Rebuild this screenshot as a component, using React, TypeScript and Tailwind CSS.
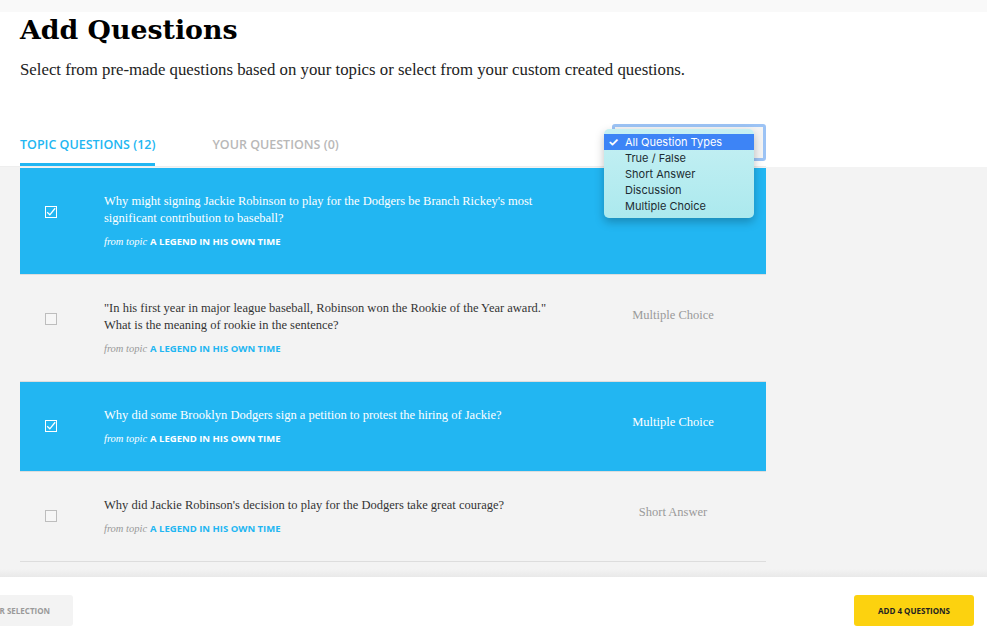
import React from 'react';

type Question = {
  lines: string[];
  topic: string;
  type: string;
  checked: boolean;
};

const questions: Question[] = [
  {
    lines: [
      "Why might signing Jackie Robinson to play for the Dodgers be Branch Rickey's most",
      'significant contribution to baseball?',
    ],
    topic: 'A LEGEND IN HIS OWN TIME',
    type: 'Multiple Choice',
    checked: true,
  },
  {
    lines: [
      '"In his first year in major league baseball, Robinson won the Rookie of the Year award."',
      'What is the meaning of rookie in the sentence?',
    ],
    topic: 'A LEGEND IN HIS OWN TIME',
    type: 'Multiple Choice',
    checked: false,
  },
  {
    lines: ['Why did some Brooklyn Dodgers sign a petition to protest the hiring of Jackie?'],
    topic: 'A LEGEND IN HIS OWN TIME',
    type: 'Multiple Choice',
    checked: true,
  },
  {
    lines: ["Why did Jackie Robinson's decision to play for the Dodgers take great courage?"],
    topic: 'A LEGEND IN HIS OWN TIME',
    type: 'Short Answer',
    checked: false,
  },
];

const typeOptions = ['All Question Types', 'True / False', 'Short Answer', 'Discussion', 'Multiple Choice'];

const serif = 'font-["Liberation_Serif","DejaVu_Serif",serif]';
const sans = 'font-["Open_Sans","Liberation_Sans",sans-serif]';

function Checkbox({ checked }: { checked: boolean }) {
  if (checked) {
    return (
      <div className="w-[12px] h-[12px] border-[1.5px] border-white flex items-center justify-center">
        <svg viewBox="0 0 12 12" className="w-[11px] h-[11px]" fill="none" stroke="white" strokeWidth={1.6}>
          <path d="M2 6.2l2.6 2.6L10.5 1.5" strokeLinecap="square" />
        </svg>
      </div>
    );
  }
  return <div className="w-[12px] h-[12px] border border-[#bdbdbd] bg-[#f6f6f6]" />;
}

function QuestionRow({ q }: { q: Question }) {
  const on = q.checked;
  return (
    <div
      className={`flex items-start py-[25px] border-b border-[#dddddd] ${
        on ? 'bg-[#22b6f2] text-white' : 'bg-[#f3f3f3] text-[#333333]'
      }`}
    >
      <div className="w-[84px] pl-[25px] pt-[13px] shrink-0">
        <Checkbox checked={on} />
      </div>
      <div className="w-[476px] shrink-0">
        <p className={`${serif} text-[12.5px] leading-[17px] whitespace-nowrap`}>
          {q.lines.map((l, i) => (
            <span key={i} className="block">
              {l}
            </span>
          ))}
        </p>
        <p className="mt-[8px] h-[14px] flex items-baseline gap-[3px] leading-[14px] whitespace-nowrap">
          <span className={`${serif} italic text-[10.5px] ${on ? 'text-white' : 'text-[#999999]'}`}>from topic</span>
          <span className={`${sans} font-bold text-[9.5px] ${on ? 'text-white' : 'text-[#22b6f2]'}`}>{q.topic}</span>
        </p>
      </div>
      <div
        className={`flex-1 text-center pt-[7px] ${serif} text-[12.5px] leading-[17px] ${
          on ? 'text-white' : 'text-[#9a9a9a]'
        }`}
      >
        {q.type}
      </div>
    </div>
  );
}

function TypeSelect() {
  return (
    <div className="relative w-[154px] h-[37px] mb-[5px] rounded-[3px] border-[3px] border-[#9cc3f5] bg-[#f4f4f4]">
      <div className="absolute left-[-11px] top-[2px] w-[150px] pt-[5px] pb-[4px] rounded-[5px] bg-gradient-to-b from-[#c6f0f3] to-[#abe9ee] shadow-[0_4px_10px_rgba(0,0,0,0.25)] font-['Inter','Liberation_Sans',sans-serif] text-[11px] text-[#1c2c32]">
        {typeOptions.map((opt, i) => (
          <div
            key={opt}
            className={`h-[16px] leading-[16px] flex items-center ${i === 0 ? 'bg-[#3d84f6] text-white' : ''}`}
          >
            <span className="w-[21px] pl-[4px] text-[12px] font-bold">{i === 0 ? '✓' : ''}</span>
            <span>{opt}</span>
          </div>
        ))}
      </div>
    </div>
  );
}

export default function App() {
  return (
    <div className="w-[987px] h-[644px] bg-white overflow-hidden flex flex-col">
      <div className="h-[12px] bg-[#f9f9f9] shrink-0" />

      <header className="px-5 shrink-0">
        <h1 className={`font-["DejaVu_Serif",serif] font-bold text-[26.8px] leading-[34px] text-black mt-[1px]`}>
          Add Questions
        </h1>
        <p className={`${serif} text-[16.8px] leading-[20px] text-[#222222] mt-[13px]`}>
          Select from pre-made questions based on your topics or select from your custom created questions.
        </p>
      </header>

      <div className="flex items-end justify-between w-[766px] pl-5 mt-[44px] shrink-0 border-b border-[#eeeeee]">
        <div className={`flex ${sans} font-semibold text-[12.5px] leading-[16px]`}>
          <div className="text-[#22b6f2] pt-[6px] pb-[10px] border-b-[3px] border-[#22b6f2]">TOPIC QUESTIONS (12)</div>
          <div className="text-[#b8b8b8] pt-[6px] pb-[10px] ml-[57px]">YOUR QUESTIONS (0)</div>
        </div>
        <TypeSelect />
      </div>

      <main className="flex-1 bg-[#f3f3f3] flex flex-col pt-[1px]">
        <div className="ml-5 w-[746px]">
          {questions.map((q, i) => (
            <QuestionRow key={i} q={q} />
          ))}
        </div>
        <div className="flex-1" />
        <div className="h-[8px] bg-gradient-to-b from-[#f3f3f3] to-[#e9e9e9]" />
      </main>

      <footer className={`h-[67px] shrink-0 flex items-start justify-between pt-[18px] pr-[13px] ${sans} font-bold text-[8px]`}>
        <button className="-ml-[43px] h-[31px] w-[116px] rounded-[3px] bg-[#f3f3f3] text-[#9a9a9a]">
          CLEAR SELECTION
        </button>
        <button className="h-[31px] w-[120px] rounded-[3px] bg-[#fcd20f] text-[#222222]">ADD 4 QUESTIONS</button>
      </footer>
    </div>
  );
}
